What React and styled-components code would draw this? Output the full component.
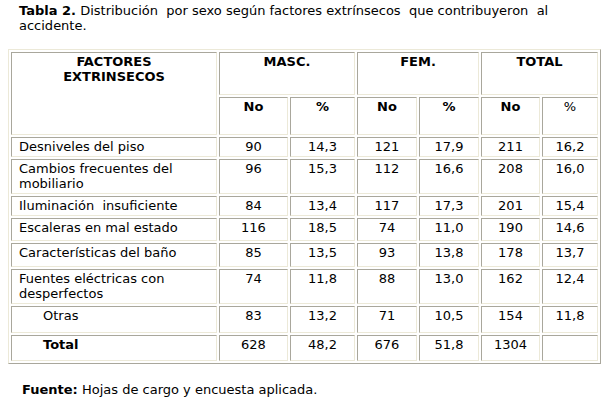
import React from "react";
import styled, { createGlobalStyle } from "styled-components";

const Global = createGlobalStyle`
  html, body { margin: 0; padding: 0; background: #fff; }
  body { font-family: "DejaVu Sans", Verdana, sans-serif; color: #000; }
`;

const LIGHT = "#ECE9D8";
const DARK = "#A9A79C";

const Page = styled.div`
  width: 609px;
  height: 401px;
  padding: 3px 0 0 8px;
  box-sizing: border-box;
  font-size: 13px;
  line-height: 15px;
`;

const Caption = styled.div`
  margin-left: 11px;
  white-space: pre-wrap;
  height: 30px;
`;

const Table = styled.table`
  margin-top: 16px;
  width: 593px;
  table-layout: fixed;
  border-collapse: separate;
  border-spacing: 2px;
  border: 1px solid;
  border-color: ${LIGHT} ${DARK} ${DARK} ${LIGHT};
  font-size: 13px;
  line-height: 15px;
`;

const Cell = styled.td`
  border: 1px solid;
  border-color: ${DARK} ${LIGHT} ${LIGHT} ${DARK};
  padding: 1px 7px 2px;
  padding-left: ${(p) => (p.$indent ? "31px" : "7px")};
  vertical-align: top;
  text-align: ${(p) => (p.$center ? "center" : "left")};
  font-weight: ${(p) => (p.$bold ? "bold" : "normal")};
  white-space: pre-wrap;
  height: ${(p) => p.$h}px;
  box-sizing: border-box;
`;

const Foot = styled.div`
  margin: 18px 0 0 14px;
`;

const rows = [
  ["Desniveles del piso", "90", "14,3", "121", "17,9", "211", "16,2", 20],
  ["Cambios frecuentes del\nmobiliario", "96", "15,3", "112", "16,6", "208", "16,0", 35],
  ["Iluminación  insuficiente", "84", "13,4", "117", "17,3", "201", "15,4", 20],
  ["Escaleras en mal estado", "116", "18,5", "74", "11,0", "190", "14,6", 23],
  ["Características del baño", "85", "13,5", "93", "13,8", "178", "13,7", 24],
  ["Fuentes eléctricas con\ndesperfectos", "74", "11,8", "88", "13,0", "162", "12,4", 35],
];

export default function App() {
  return (
    <Page>
      <Global />
      <Caption>
        <b>Tabla 2.</b> Distribución  por sexo según factores extrínsecos  que contribuyeron  al{"\n"}accidente.
      </Caption>
      <Table>
        <colgroup>
          <col style={{ width: 206 }} />
          <col style={{ width: 69 }} />
          <col style={{ width: 65 }} />
          <col style={{ width: 60 }} />
          <col style={{ width: 60 }} />
          <col style={{ width: 59 }} />
          <col style={{ width: 56 }} />
        </colgroup>
        <tbody>
          <tr>
            <Cell as="th" rowSpan={2} $center $bold $h={43}>
              FACTORES{"\n"}EXTRINSECOS
            </Cell>
            <Cell as="th" colSpan={2} $center $bold $h={43}>MASC.</Cell>
            <Cell as="th" colSpan={2} $center $bold $h={43}>FEM.</Cell>
            <Cell as="th" colSpan={2} $center $bold $h={43}>TOTAL</Cell>
          </tr>
          <tr>
            <Cell as="th" $center $bold $h={38}>No</Cell>
            <Cell as="th" $center $bold $h={38}>%</Cell>
            <Cell as="th" $center $bold $h={38}>No</Cell>
            <Cell as="th" $center $bold $h={38}>%</Cell>
            <Cell as="th" $center $bold $h={38}>No</Cell>
            <Cell as="th" $center $h={38}>%</Cell>
          </tr>
          {rows.map((r) => (
            <tr key={r[0]}>
              <Cell $h={r[7]}>{r[0]}</Cell>
              {r.slice(1, 7).map((v, i) => (
                <Cell key={i} $center $h={r[7]}>{v}</Cell>
              ))}
            </tr>
          ))}
          <tr>
            <Cell $indent $h={27}>Otras</Cell>
            {["83", "13,2", "71", "10,5", "154", "11,8"].map((v, i) => (
              <Cell key={i} $center $h={27}>{v}</Cell>
            ))}
          </tr>
          <tr>
            <Cell $indent $bold $h={26}>Total</Cell>
            {["628", "48,2", "676", "51,8", "1304", ""].map((v, i) => (
              <Cell key={i} $center $h={26}>{v}</Cell>
            ))}
          </tr>
        </tbody>
      </Table>
      <Foot>
        <b>Fuente:</b> Hojas de cargo y encuesta aplicada.
      </Foot>
    </Page>
  );
}
